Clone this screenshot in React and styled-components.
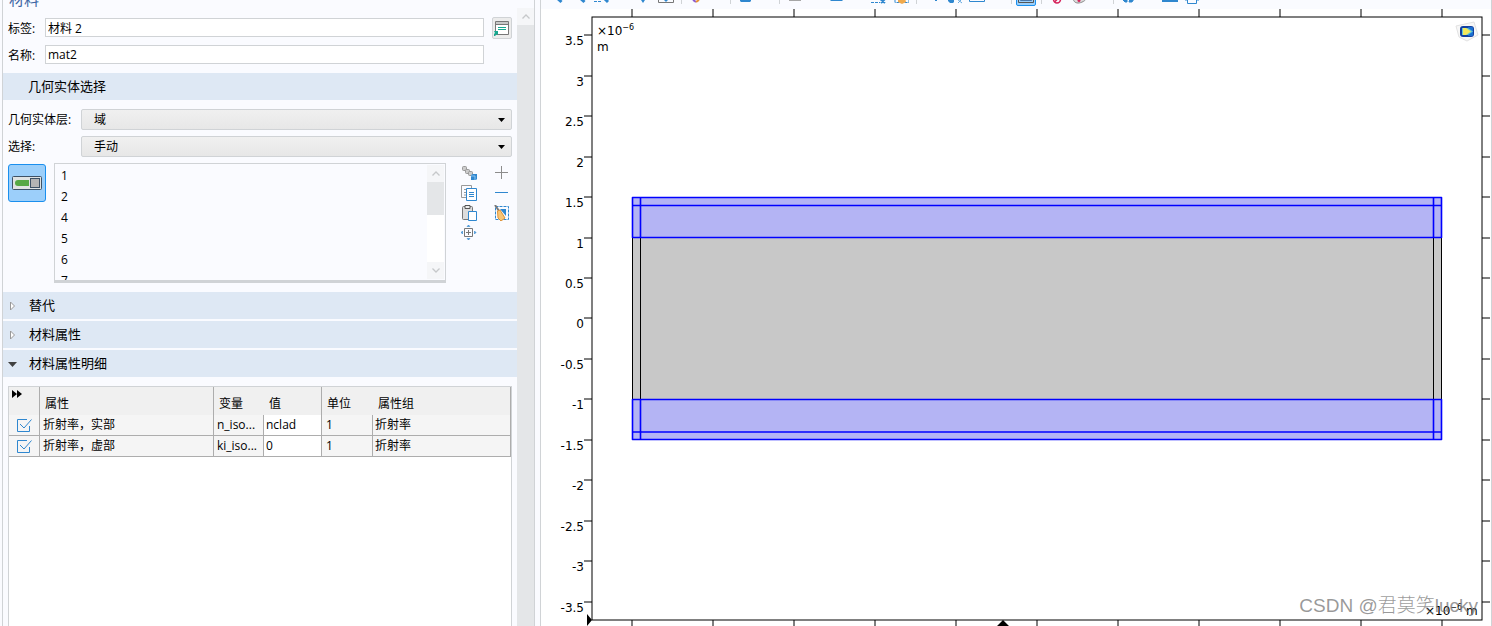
import React, { useState } from 'react'
import styled, { createGlobalStyle } from 'styled-components'

const ITEMS = ['1', '2', '4', '5', '6', '7', '8', '9']

const ROWS = [
  { id: 'n', name: '折射率，实部', variable: 'n_iso...', value: 'nclad', unit: '1', group: '折射率' },
  { id: 'ki', name: '折射率，虚部', variable: 'ki_iso...', value: '0', unit: '1', group: '折射率' },
]

const TICKS_Y = [3.5, 3, 2.5, 2, 1.5, 1, 0.5, 0, -0.5, -1, -1.5, -2, -2.5, -3, -3.5]
const TICKS_X = [0, 1, 2, 3, 4, 5, 6, 7, 8, 9, 10]

const yOf = v => Math.round(318.45 - v * 80.94)
const xOf = i => 632 + i * 81

const blue = '#2f87cf'

const zoomTail = <path d="M9.5 9.5l5 4.5" stroke={blue} strokeWidth="3" />

// name, drawing, has a drop-down arrow, is pressed
const TOOLS = [
  [
    { name: '放大', art: zoomTail },
    { name: '缩小', art: zoomTail },
    { name: '框选缩放', menu: true, art: <><path d="M1 13.5h8" stroke={blue} strokeDasharray="3 1" /><path d="M11 10l4 4" stroke={blue} strokeWidth="3" /></> },
    { name: '移动', art: <path d="M6 12h4l-2 3z" fill={blue} /> },
    { name: '缩放到窗口大小', art: <><path d="M.5 2v12.5h15V2" stroke="#777" /><path d="M5 11h6l-3 3z" fill={blue} /></> },
  ],
  [{ name: '方向', menu: true, art: <><path d="M5 12l3 2" stroke="#8a5bd0" strokeWidth="2" /><path d="M8 14l3-2" stroke="#e79036" strokeWidth="2" /></> }],
  [{ name: '视图', menu: true, art: <path d="M3 11h11v2l-1 1H4l-1-1z" fill={blue} /> }],
  [
    { name: '选择对象', menu: true, art: <path d="M3 11h12v2H3z" fill="#a6a6a6" /> },
    { name: '选择域', menu: true, art: <path d="M2 11h13v1l-1 1H3l-1-1z" fill={blue} /> },
    { name: '框选', art: <><path d="M1 14.5h9" stroke={blue} strokeDasharray="3 1" /><path d="M9 10l6 5M15 11l-4 4" stroke={blue} strokeWidth="2" /></> },
    { name: '取消框选', art: <><path d="M2 12v2.500h14V12" stroke={blue} strokeDasharray="3 1" /><path d="M5 10h7l1 4-4 2-4-2z" fill="#f0a94c" /></> },
  ],
  [
    { name: '隐藏', art: <path d="M12 12h2v1h-2z" fill={blue} /> },
    { name: '显示', art: <><path d="M2 11h6v3l-1 1H4l-2-2z" fill={blue} /><path d="M11 11l5 4M16 11l-4 4" stroke="#65a9df" /></> },
    { name: '重置隐藏', menu: true, art: <path d="M.5 5v8.5h15V5" stroke={blue} /> },
  ],
  [{ name: '材料颜色', pressed: true, art: <><path d="M.5 2v12.5h15V2" stroke="#555" /><path d="M2.500 8h11v4.5h-11z" fill="#5b9ad8" stroke="#4875a8" /></> }],
  [
    { name: '禁用', art: <><circle cx="9" cy="11.500" r="3.500" stroke="#d6245c" strokeWidth="1.500" /><path d="M6.500 14l5-5" stroke="#d6245c" strokeWidth="1.500" /></> },
    { name: '调色', menu: true, art: <><path d="M2 9c0 4 2 6 5 6s8-2 9-6z" fill="#ddd" stroke="#888" /><circle cx="8" cy="12.500" r="1.500" fill="#d6245c" /></> },
  ],
  [
    { name: '更新', menu: true, art: <path d="M2 11h5v3H5zM9 14h3l2-3h-4z" fill={blue} stroke={blue} /> },
    { name: '图像快照', art: <path d="M0 10h16v4H0z" fill={blue} /> },
    { name: '打印', art: <path d="M0 12h3M12 12h2M2.500 10v5.500h9V10" stroke={blue} /> },
  ],
]

function Art({ children, size = 16 }) {
  return (
    <svg width={size} height={size} viewBox="0 0 16 16" fill="none" aria-hidden="true">
      {children}
    </svg>
  )
}

function Toolbar() {
  return (
    <ToolStrip>
      {TOOLS.map((group, g) => (
        <React.Fragment key={g}>
          {g > 0 && <Separator />}
          {group.map(tool => (
            <ToolButton key={tool.name} aria-label={tool.name} $menu={tool.menu} $pressed={tool.pressed}>
              <Art>{tool.art}</Art>
            </ToolButton>
          ))}
        </React.Fragment>
      ))}
    </ToolStrip>
  )
}

function Dropdown({ id, label, options }) {
  return (
    <SelectRow>
      <label htmlFor={id}>{label}</label>
      <SelectBox>
        <select id={id}>
          {options.map(o => <option key={o}>{o}</option>)}
        </select>
        <svg width="7" height="4" viewBox="0 0 7 4" aria-hidden="true"><path d="M0 0h7L3.5 4z" /></svg>
      </SelectBox>
    </SelectRow>
  )
}

function Chevron({ up }) {
  return (
    <svg width="8" height="5" viewBox="0 0 8 5" fill="none" aria-hidden="true">
      <path d={up ? 'M.5 4.5L4 1l3.5 3.5' : 'M.5 .5L4 4l3.5-3.5'} stroke="#c6c8ca" strokeWidth="1.3" />
    </svg>
  )
}

function Section({ title, open }) {
  return (
    <SectionBar aria-expanded={!!open}>
      <svg width="10" height="12" viewBox="0 0 10 12" aria-hidden="true">
        {open
          ? <path d="M0 5h9L4.500 10z" fill="#404040" />
          : <path d="M2.500 3v8l4-4z" fill="#fff" stroke="#999" />}
      </svg>
      {title}
    </SectionBar>
  )
}

function SelectionList() {
  return (
    <SelectionRow>
      <ActiveToggle aria-label="激活选择" aria-pressed="true">
        <svg width="30" height="14" viewBox="0 0 30 14" aria-hidden="true">
          <rect x=".5" y=".5" width="29" height="13" rx="1" fill="#dfe3e3" stroke="#3d5166" />
          <path d="M17 4H6a3 3 0 000 6h11z" fill="#55a845" />
          <rect x="18.500" y="2.500" width="9" height="9" fill="#b4b4b4" stroke="#3d5166" />
        </svg>
      </ActiveToggle>
      <ListBox>
        <ul>
          {ITEMS.map(i => <li key={i}>{i}</li>)}
        </ul>
        <ListScroll>
          <ScrollEnd><Chevron up /></ScrollEnd>
          <ListThumb />
          <ScrollEnd><Chevron /></ScrollEnd>
        </ListScroll>
      </ListBox>
      <ListActions>
        <IconButton aria-label="创建选择">
          <Art>
            <g fill="#ccc" stroke="#999">
              <rect x="1.500" y="1.500" width="4" height="4" rx="1" />
              <rect x="4.500" y="4.500" width="4" height="4" rx="1" />
              <rect x="7.500" y="6.500" width="4" height="4" rx="1" />
            </g>
            <path d="M10 10l2-1h4v5l-1 1h-5z" fill={blue} />
            <path d="M10 11h4v4" stroke="#8cc3ee" />
          </Art>
        </IconButton>
        <IconButton aria-label="添加到选择">
          <Art><path d="M7.500 1v13M1 7.500h13" stroke="#8c8c8c" /></Art>
        </IconButton>
        <IconButton aria-label="复制选择">
          <Art>
            <path d="M5 12.500H.5V.5h10V3M3 4.500h2M3 7.500h2M3 10h2" stroke="#999" />
            <path d="M5.500 3.500h10v12h-10z" fill="#fff" stroke={blue} />
            <path d="M8 7.500h5M8 9.500h5M8 11.500h5" stroke={blue} />
          </Art>
        </IconButton>
        <IconButton aria-label="从选择中移除">
          <Art><path d="M1 7.500h13" stroke={blue} /></Art>
        </IconButton>
        <IconButton aria-label="粘贴选择">
          <Art>
            <rect x="1.500" y="1.500" width="10" height="13" rx="1" fill="#ddd" stroke="#777" />
            <path d="M4 .5h5v3H4z" fill="#eee" stroke="#555" />
            <path d="M7.500 6.500h8v9h-8z" fill="#fff" stroke={blue} />
          </Art>
        </IconButton>
        <IconButton aria-label="清除选择">
          <Art>
            <path d="M1.500 1.500h13v13h-13z" stroke={blue} strokeDasharray="3 1" />
            <path d="M6 4h6v7z" fill={blue} />
            <path d="M1 0l4 6" stroke="#777" strokeWidth="2" />
            <path d="M3.500 6L6 5l5 8-4 3-3-3z" fill="#f8c676" stroke="#dc9238" />
          </Art>
        </IconButton>
        <IconButton aria-label="缩放到选择">
          <Art>
            <path d="M3.500 3.500h8v8h-8zM7.500 5v5M5 7.500h5" stroke="#777" />
            <path d="M6 1.500L7.500 0 9 1.500zM6 13.500L7.500 15 9 13.500zM1.500 6L0 7.500 1.500 9zM13.500 6L15 7.500 13.500 9z" fill={blue} stroke={blue} strokeWidth=".5" />
          </Art>
        </IconButton>
      </ListActions>
    </SelectionRow>
  )
}

function PropertyTable() {
  const [checked, setChecked] = useState({ n: true, ki: true })
  return (
    <TableFrame>
      <Table>
        <colgroup>
          <col width="31" /><col /><col width="50" /><col width="58" /><col width="51" /><col width="138" />
        </colgroup>
        <thead>
          <tr>
            <Th $line $top>
              <svg width="10" height="8" viewBox="0 0 10 8" role="img" aria-label="展开"><path d="M0 0l5 4-5 4zM5 0l5 4-5 4z" /></svg>
            </Th>
            <Th $line>属性</Th>
            <Th>变量</Th>
            <Th $line>值</Th>
            <Th>单位</Th>
            <Th $line>属性组</Th>
          </tr>
        </thead>
        <tbody>
          {ROWS.map(r => (
            <tr key={r.id}>
              <Td>
                <Check>
                  <input
                    type="checkbox"
                    aria-label={r.name}
                    checked={checked[r.id]}
                    onChange={e => setChecked({ ...checked, [r.id]: e.target.checked })}
                  />
                  <svg width="15" height="13" viewBox="0 0 15 13" fill="none" aria-hidden="true">
                    <path d="M10 .5H.5v12h12V7" stroke={blue} />
                    {checked[r.id] && <path d="M3 5l4 4 7.500-8.500" stroke={blue} />}
                  </svg>
                </Check>
              </Td>
              <Td>{r.name}</Td>
              <Td>{r.variable}</Td>
              <Td $edit $pad={2}><input aria-label={`${r.name} 值`} defaultValue={r.value} /></Td>
              <Td $pad={4}>{r.unit}</Td>
              <Td $pad={2}>{r.group}</Td>
            </tr>
          ))}
        </tbody>
      </Table>
    </TableFrame>
  )
}

function Plot() {
  return (
    <PlotSvg viewBox="541 9 950 617" preserveAspectRatio="xMinYMin meet">
      <rect x="632.500" y="197.500" width="809" height="242" fill="#c8c8c8" />
      <path d="M632.500 238v162M640.500 238v162M1433.500 238v162M1441.500 238v162" stroke="#000" />
      <g fill="#b4b4f4" stroke="#00f" strokeWidth="1.600" strokeLinejoin="round">
        <rect x="632.500" y="197.500" width="809" height="40" />
        <rect x="632.500" y="399.500" width="809" height="40" />
        <path d="M632.500 205.500h809M632.500 432h809M640.500 197.500v40M1433.500 197.500v40M640.500 399.500v40M1433.500 399.500v40" />
      </g>

      <rect x="592" y="17" width="890" height="603" fill="none" stroke="#000" />
      {TICKS_X.map(i => (
        <path key={i} d={`M${xOf(i)} 9v8M${xOf(i)} 620v6`} stroke="#000" />
      ))}
      {TICKS_Y.map(v => (
        <g key={v}>
          <path d={`M584 ${yOf(v)}h8M1482 ${yOf(v)}h8`} stroke="#000" />
          <text x="584" y={yOf(v) + 10} textAnchor="end">{v}</text>
        </g>
      ))}
      <path d="M587 614l5 6-5 6zM997 626l6-6 6 6z" />

      <text x="597" y="35">×10<tspan dy="-5" fontSize="8">−6</tspan></text>
      <text x="597" y="51">m</text>
      <text x="1425" y="615">×10<tspan dy="-5" fontSize="8">−6</tspan><tspan dy="5"> m</tspan></text>

      <g>
        <path d="M1456 26l18-4 4 13-11 6-8-4z" fill="#f7f7f7" stroke="#e2e2e2" />
        <rect x="1460" y="26" width="14" height="11" rx="3" fill="#123f9f" />
        <rect x="1468" y="27" width="5" height="9" rx="1" fill="#1b6fd0" />
        <path d="M1462 28h6l5 3.500-5 3.500h-6z" fill="#5fc3d8" />
        <path d="M1463 28h3l5 3.500-5 3.500h-3z" fill="#f2e75b" />
      </g>
    </PlotSvg>
  )
}

export default function App() {
  return (
    <Page>
      <GlobalStyle />
      <Settings>
        <Title>材料</Title>
        <Scroller>
          <Content>
            <Fields>
              <FieldRow>
                <label htmlFor="tag">标签:</label>
                <input id="tag" defaultValue="材料 2" />
                <RenameButton aria-label="显示标签">
                  <Art>
                    <path d="M1.500 1.500h13v13h-13z" fill="#fff" stroke="#777" />
                    <path d="M2 2h12v2H2z" fill="#c8c8c8" />
                    <path d="M1.500 4.500h13" stroke="#777" />
                    <path d="M4 7.500h8M4 9.500h8" stroke="#17a890" />
                    <path d="M0 11h4v4l-1-1-2 2H0v-2l1-1z" fill="#17a890" />
                  </Art>
                </RenameButton>
              </FieldRow>
              <FieldRow>
                <label htmlFor="name">名称:</label>
                <input id="name" defaultValue="mat2" />
              </FieldRow>
            </Fields>
            <Heading>几何实体选择</Heading>
            <Selects>
              <Dropdown id="level" label="几何实体层:" options={['域', '边界', '点']} />
              <Dropdown id="selection" label="选择:" options={['手动', '所有域']} />
            </Selects>
            <SelectionList />
            <Sections>
              <Section title="替代" />
              <Section title="材料属性" />
              <Section title="材料属性明细" open />
            </Sections>
            <PropertyTable />
          </Content>
          <PanelScroll><ScrollEnd><Chevron up /></ScrollEnd></PanelScroll>
        </Scroller>
      </Settings>
      <Graphics>
        <Toolbar />
        <Plot />
        <Watermark>CSDN @君莫笑lucky</Watermark>
      </Graphics>
    </Page>
  )
}

const GlobalStyle = createGlobalStyle`
  * {
    box-sizing: border-box;
  }
  body {
    margin: 0;
    overflow: hidden;
    background: #fafbff;
  }
  body, button, input, select {
    color: #000;
    font-family: "Open Sans", "Noto Sans CJK SC", sans-serif;
    font-size: 12px;
  }
  svg {
    display: block;
    flex: none;
  }
`

const Page = styled.div`
  display: flex;
  gap: 5px;
  height: 100vh;
  padding: 0 0 0 2px;
`

const Settings = styled.aside`
  display: flex;
  flex-direction: column;
  flex: 0 0 533px;
  border: solid #d0d3d6;
  border-width: 0 1px;
`

const Title = styled.div`
  display: flex;
  align-items: flex-end;
  height: 8px;
  padding-left: 6px;
  overflow: hidden;
  color: #3c66a4;
  font-size: 15px;
  line-height: 18px;
`

const Scroller = styled.div`
  display: flex;
  flex: 1;
  min-height: 0;
`

const Content = styled.div`
  display: flex;
  flex-direction: column;
  flex: 1;
  min-width: 0;
`

const PanelScroll = styled.div`
  flex: 0 0 17px;
  background: #e4e6e8;
`

const ScrollEnd = styled.div`
  display: flex;
  align-items: center;
  justify-content: center;
  height: 17px;
  background: #f5f6f8;
`

const Fields = styled.div`
  display: flex;
  flex-direction: column;
  gap: 8px;
  padding: 10px 5px 9px;
`

const FieldRow = styled.div`
  display: flex;
  align-items: center;
  height: 19px;
  padding-right: 28px;

  label {
    flex: 0 0 37px;
  }

  input {
    flex: 1;
    min-width: 0;
    height: 19px;
    padding: 0 2px;
    border: 1px solid #d0d3d6;
    background: #fff;
  }
`

const RenameButton = styled.button`
  display: flex;
  align-items: center;
  align-self: flex-start;
  justify-content: center;
  width: 20px;
  height: 22px;
  margin: -1px -28px 0 8px;
  padding: 0;
  border: 1px solid #d0d3d6;
  border-radius: 2px;
  background: #ececec;
`

const Heading = styled.h2`
  height: 27px;
  margin: 0;
  padding-left: 25px;
  background: #dee8f4;
  font-size: 13px;
  font-weight: 400;
  line-height: 27px;
`

const Selects = styled.div`
  display: flex;
  flex-direction: column;
  gap: 6px;
  padding: 9px 5px 6px;
`

const SelectRow = styled.div`
  display: flex;
  align-items: center;

  label {
    flex: 0 0 73px;
    line-height: 19px;
    white-space: nowrap;
  }
`

const SelectBox = styled.div`
  position: relative;
  flex: 1;

  select {
    display: block;
    width: 100%;
    height: 21px;
    padding: 0 12px;
    appearance: none;
    border: 1px solid #d0d3d6;
    border-radius: 2px;
    background: linear-gradient(#f0f0f0, #e7e7e7);
  }

  svg {
    position: absolute;
    top: 9px;
    right: 7px;
    pointer-events: none;
  }
`

const SelectionRow = styled.div`
  display: flex;
  align-items: flex-start;
  gap: 8px;
  padding: 0 5px 9px;
`

const ActiveToggle = styled.button`
  display: flex;
  align-items: center;
  justify-content: center;
  width: 38px;
  height: 38px;
  margin-top: 1px;
  padding: 0;
  border: 1px solid #1a8fee;
  border-radius: 3px;
  background: #9ccffa;
`

const ListBox = styled.div`
  display: flex;
  flex: 1;
  height: 120px;
  border: 1px solid #d0d3d6;
  border-bottom-width: 3px;
  overflow: hidden;

  ul {
    flex: 1;
    margin: 0;
    padding: 1px 6px;
    list-style: none;
  }

  li {
    line-height: 21px;
  }
`

const ListScroll = styled.div`
  display: flex;
  flex-direction: column;
  justify-content: space-between;
  width: 17px;
  margin: 1px 1px 1px 0;
  background: #fff;
`

const ListThumb = styled.div`
  height: 33px;
  margin-bottom: auto;
  background: #e4e6e8;
`

const ListActions = styled.div`
  display: grid;
  grid-template-columns: 16px 16px;
  grid-auto-rows: 16px;
  gap: 4px 17px;
  padding: 2px 2px 0 7px;
`

const IconButton = styled.button`
  width: 16px;
  height: 16px;
  padding: 0;
  border: 0;
  background: none;
`

const Sections = styled.div`
  display: flex;
  flex-direction: column;
  gap: 2px;
`

const SectionBar = styled.button`
  display: flex;
  align-items: center;
  gap: 11px;
  height: 27px;
  padding: 0 5px 2px;
  border: 0;
  background: #dee8f4;
  font-size: 13px;
  text-align: left;
`

const TableFrame = styled.div`
  flex: 1;
  margin: 9px 5px 0;
  border: 1px solid #d0d3d6;
  border-bottom: 0;
  background: #fff;
`

const Table = styled.table`
  width: 100%;
  table-layout: fixed;
  border-collapse: separate;
  border-spacing: 0;
`

const Th = styled.th`
  height: 28px;
  padding: ${p => (p.$top ? '3px 3px 0' : '6px 4px 0 5px')};
  border-right: 1px solid ${p => (p.$line ? '#adadad' : '#f0f0f0')};
  background: #f0f0f0;
  font-weight: 400;
  line-height: 18px;
  text-align: left;
  vertical-align: ${p => (p.$top ? 'top' : 'middle')};
`

const Td = styled.td`
  height: 21px;
  padding: 0 0 0 ${p => p.$pad || 3}px;
  border: solid #adadad;
  border-width: 0 1px 1px 0;
  background: ${p => (p.$edit ? '#fff' : '#f5f5f5')};
  line-height: 18px;
  white-space: nowrap;

  > input {
    display: block;
    width: 100%;
    height: 18px;
    padding: 0 0 1px;
    border: 0;
    background: none;
  }
`

const Check = styled.label`
  display: flex;
  align-items: center;
  height: 18px;
  padding-left: 5px;

  input {
    position: absolute;
    margin: 0;
    opacity: 0;
  }
`

const Graphics = styled.main`
  position: relative;
  display: flex;
  flex-direction: column;
  flex: 1;
  min-width: 0;
  border: solid #d0d3d6;
  border-width: 0 1px;
  background: #fff;
`

const ToolStrip = styled.div`
  display: flex;
  align-items: flex-end;
  gap: 3px;
  height: 9px;
  padding: 0 4px 3px;
  overflow: hidden;
  background: #fafbff;
`

const Separator = styled.span`
  flex: none;
  width: 1px;
  height: 20px;
  margin: 0 1px 2px 2px;
  background: #d0d3d6;
`

const ToolButton = styled.button`
  flex: none;
  width: 20px;
  height: 20px;
  margin: 0 ${p => (p.$menu ? 19 : 0)}px 0 0;
  padding: 1px;
  border: 1px solid ${p => (p.$pressed ? '#1a8fee' : 'transparent')};
  border-radius: 2px;
  background: ${p => (p.$pressed ? '#9ccffa' : 'none')};
`

const PlotSvg = styled.svg`
  flex: 1;
  width: 100%;
  min-height: 0;
  font-family: "DejaVu Sans", sans-serif;
  font-size: 12px;
`

const Watermark = styled.div`
  position: absolute;
  right: 13px;
  bottom: 7px;
  color: rgba(120, 120, 120, 0.75);
  font-family: "Liberation Sans", "Noto Sans CJK SC", sans-serif;
  font-size: 19px;
  font-weight: 300;
  line-height: 26px;
`
